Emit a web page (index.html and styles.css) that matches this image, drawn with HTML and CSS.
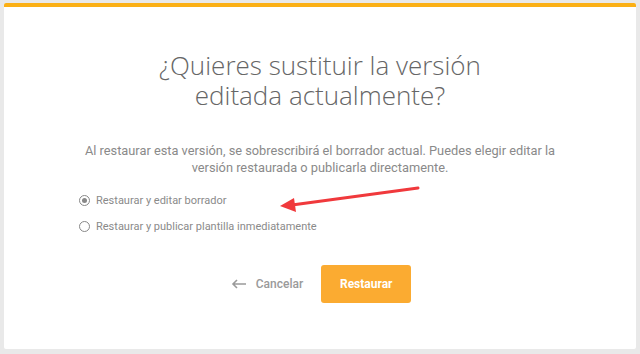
FILE: index.html
```html
<!DOCTYPE html>
<html lang="es">
<head>
    <meta charset="UTF-8">
    <title>Restaurar versión</title>
    <link rel="stylesheet" href="styles.css">
</head>
<body>
    <div class="modal">
        <div class="modal-bar"></div>
        <div class="modal-body">
            <h1 class="modal-title">¿Quieres sustituir la versión<br>editada actualmente?</h1>
            <p class="modal-text">Al restaurar esta versión, se sobrescribirá el borrador actual. Puedes elegir editar la<br>versión restaurada o publicarla directamente.</p>
            <div class="options">
                <label class="option">
                    <span class="radio checked"></span>
                    Restaurar y editar borrador
                </label>
                <label class="option">
                    <span class="radio"></span>
                    Restaurar y publicar plantilla inmediatamente
                </label>
            </div>
            <div class="actions">
                <a class="cancel" href="#">
                    <svg width="16" height="10" viewBox="0 0 16 10"><path d="M15 5H2M6 1L2 5l4 4" fill="none" stroke="#9a9a9a" stroke-width="1.6"/></svg>
                    Cancelar
                </a>
                <button class="btn-restore">Restaurar</button>
            </div>
        </div>
        <!-- flecha de anotación -->
        <svg class="arrow" width="150" height="30" viewBox="0 0 150 30">
            <path d="M144 3 L18 20" stroke="#f0393c" stroke-width="3" stroke-linecap="round"/>
            <path d="M6 21 L20 13 L22 27 Z" fill="#f0393c"/>
        </svg>
    </div>
</body>
</html>
```
FILE: styles.css
```css
body {
    margin: 0;
    padding: 3px 4px 5px;
    background: #e9e9e9;
    font-family: Roboto, Arial, sans-serif;
}
.modal {
    position: relative;
    background: #fff;
    height: 346px;
    border-radius: 2px;
    box-sizing: border-box;
    overflow: hidden;
}
.modal-bar {
    height: 4px;
    background: #fbb016;
}
.modal-body {
    padding-top: 43px;
    display: flex;
    flex-direction: column;
    align-items: center;
}
.modal-title {
    margin: 0;
    font-family: "Open Sans", sans-serif;
    font-weight: 300;
    font-size: 26px;
    line-height: 30px;
    color: #666;
    text-align: center;
}
.modal-text {
    margin: 32px 0 0;
    font-size: 12.8px;
    line-height: 17px;
    color: #8a8a8a;
    text-align: center;
}
.options {
    align-self: flex-start;
    margin: 18px 0 0 75px;
    display: flex;
    flex-direction: column;
    gap: 13px;
}
.option {
    display: flex;
    align-items: center;
    gap: 6px;
    font-size: 11px;
    color: #8a8a8a;
}
.radio {
    width: 11px;
    height: 11px;
    border: 1px solid #888;
    border-radius: 50%;
    box-sizing: border-box;
    position: relative;
}
.radio.checked::after {
    content: "";
    position: absolute;
    top: 2px;
    left: 2px;
    width: 5px;
    height: 5px;
    border-radius: 50%;
    background: #888;
}
.actions {
    margin-top: 32px;
    display: flex;
    align-items: center;
    gap: 18px;
    margin-left: 2px;
}
.cancel {
    display: flex;
    align-items: center;
    gap: 9px;
    color: #9a9a9a;
    font-size: 12px;
    font-weight: 500;
    text-decoration: none;
}
.btn-restore {
    width: 90px;
    height: 38px;
    background: #fbab31;
    border: none;
    border-radius: 3px;
    color: #fff;
    font-family: Roboto, Arial, sans-serif;
    font-size: 12px;
    font-weight: 700;
    cursor: pointer;
}
.arrow {
    position: absolute;
    left: 270px;
    top: 182px;
}
```
